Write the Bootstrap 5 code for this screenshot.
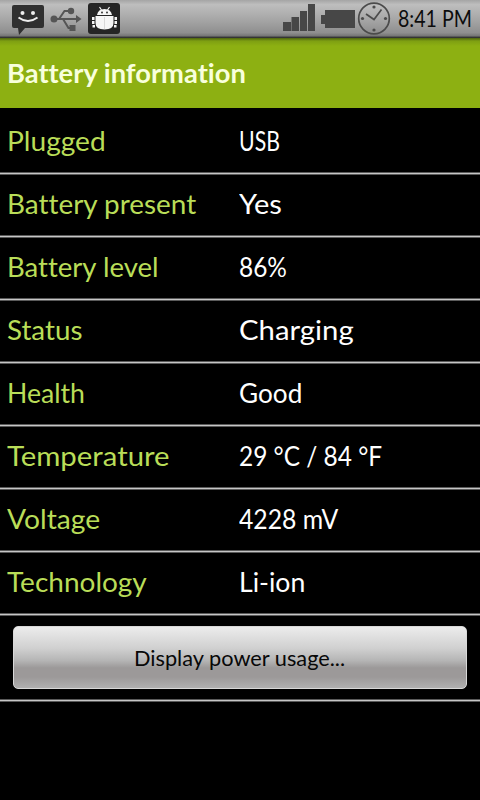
<!DOCTYPE html>
<html lang="en">
<head>
  <meta charset="UTF-8" />
  <title>Battery information</title>
  <meta name="viewport" content="width=device-width, initial-scale=1" />
  <link href="https://cdn.jsdelivr.net/npm/bootstrap@5.3.3/dist/css/bootstrap.min.css" rel="stylesheet" />
  <style>
    body {
      background-color: #000;
      color: #fff;
      font-family: "Lato", sans-serif;
      font-variant-ligatures: none;
      overflow: hidden;
    }
    .status-bar {
      height: 38px;
      background: linear-gradient(#a5a5a5, #bebebe 12%, #a4a4a4 55%, #8f8f8f 86%, #777 94%, #222);
    }
    .clock {
      width: 88px;
      padding-left: 6px;
      font-size: 22.5px;
      line-height: 38px;
      color: #0c0c0c;
    }
    .title-bar {
      height: 70px;
      padding: 0 7px;
      font-size: 26.5px;
      line-height: 70px;
      color: #f8ffdc;
      background: linear-gradient(#4d6210, #7e9f12 3px, #8db012 8px);
    }
    .fit {
      display: inline-block;
      white-space: nowrap;
      transform-origin: left center;
    }
    .info-row {
      height: 60px;
      padding-left: 7px;
      font-size: 27px;
      line-height: 58px;
    }
    .first-row {
      height: 64px;
      line-height: 65px;
    }
    .info-label {
      width: 232px;
      color: #b9dd58;
    }
    .rule {
      height: 3px;
      background: linear-gradient(#5a5a5a 1px, #c6c6c6 1px 2px, #5a5a5a 2px);
    }
    .btn-power {
      height: 63px;
      margin: 10px 13px;
      padding: 2px 0 0 120px;
      border: 1px solid #d8d8d8;
      border-radius: 5px;
      font-size: 20.5px;
      color: #080808;
      text-align: left;
      background: linear-gradient(#ececec, #d0d0d0 35%, #b5b5b5 55%, #9c9999 67%, #9c9999 82%, #b0b0b0);
    }
  </style>
</head>
<body>
  <div class="status-bar d-flex align-items-center">
    <svg width="130" height="38" viewBox="0 0 130 38">
      <path d="M14 5h28q2 0 2 2v19q0 2-2 2H25l-6 7-1-7h-4q-2 0-2-2V7q0-2 2-2z" fill="#303030"/>
      <circle cx="22.500" cy="13" r="2" fill="#eee"/><circle cx="33" cy="13" r="2" fill="#eee"/>
      <path d="M18.500 17.500q9.500 7 19 0" fill="none" stroke="#eee" stroke-width="2"/>
      <g fill="none" stroke="#555" stroke-width="2">
        <path d="M54 19h24M59 19l5.500-8h5M63 19l5.500 9h4"/>
      </g>
      <g fill="#555"><circle cx="54" cy="19" r="3.500"/><circle cx="71" cy="11" r="3.200"/><path d="M69.500 25h6v6h-6zM76 15l5.500 4-5.500 4z"/></g>
      <rect x="88" y="3" width="32" height="31" rx="3" fill="#252525"/>
      <g fill="#f5f5f5">
        <path d="M97 15q1-6 7.500-6t7.500 6zM95.500 16h18v7q0 6.500-9 6.500t-9-6.500z"/>
        <path d="M92 17h2.500v3H92zM92 21h2.500v3H92zM92.500 25h2.500v2.500h-2.500zM114.500 17h2.500v3h-2.500zM114.500 21h2.500v3h-2.500zM114 25h2.500v2.500H114z"/>
      </g>
      <path d="M99.500 7l2 3M109.500 7l-2 3" stroke="#f5f5f5" stroke-width="1.200" fill="none"/>
      <circle cx="102" cy="12.500" r=".9" fill="#252525"/><circle cx="107" cy="12.500" r=".9" fill="#252525"/>
      <path d="M104.500 17v12" stroke="#ccc" stroke-width=".7"/>
    </svg>
    <svg class="ms-auto" width="112" height="38" viewBox="280 0 112 38">
      <path d="M283 22h8v9h-8zM291.500 17h7.500v14h-7.500zM300 11h7v20h-7zM308 4h7v27h-7z" fill="#474747"/>
      <path d="M325 10h30v18h-30v-4h-4v-9h4z" fill="#474747"/>
      <circle cx="374" cy="18.500" r="15.300" fill="none" stroke="#4b4b4b" stroke-width="1.700"/>
      <path d="M366 14l8 5.500 7.500-10" fill="none" stroke="#4b4b4b" stroke-width="1.700"/>
      <g fill="#4b4b4b"><circle cx="374" cy="7" r="1.600"/><circle cx="374" cy="30" r="1.600"/><circle cx="362.500" cy="18.500" r="1.600"/><circle cx="385.500" cy="18.500" r="1.600"/></g>
    </svg>
    <div class="clock"><span class="fit" data-width="74">8:41 PM</span></div>
  </div>
  <div class="title-bar fw-bold"><span class="fit" data-width="239">Battery information</span></div>

  <div id="infoList"></div>

  <div class="d-grid">
    <button type="button" class="btn btn-power"><span class="fit" data-width="211">Display power usage...</span></button>
  </div>
  <div class="rule"></div>

  <script>
    // label, label width, value, value width
    const infos = [
      ["Plugged", 99, "USB", 41],
      ["Battery present", 189, "Yes", 43],
      ["Battery level", 152, "86%", 48],
      ["Status", 75, "Charging", 115],
      ["Health", 78, "Good", 63],
      ["Temperature", 163, "29 °C / 84 °F", 143],
      ["Voltage", 93, "4228 mV", 99],
      ["Technology", 140, "Li-ion", 66]
    ];

    const list = document.getElementById("infoList");
    infos.forEach(([label, labelWidth, value, valueWidth], index) => {
      const row = document.createElement("div");
      row.className = `info-row d-flex ${index === 0 ? 'first-row' : ''}`;
      row.innerHTML = `
        <div class="info-label"><span class="fit" data-width="${labelWidth}">${label}</span></div>
        <div><span class="fit" data-width="${valueWidth}">${value}</span></div>
      `;
      list.appendChild(row);
      list.insertAdjacentHTML("beforeend", '<div class="rule"></div>');
    });

    document.querySelectorAll(".fit").forEach((el) => {
      el.style.transform = `scaleX(${el.dataset.width / el.offsetWidth})`;
    });
  </script>
  <script src="https://cdn.jsdelivr.net/npm/bootstrap@5.3.3/dist/js/bootstrap.bundle.min.js"></script>
</body>
</html>
